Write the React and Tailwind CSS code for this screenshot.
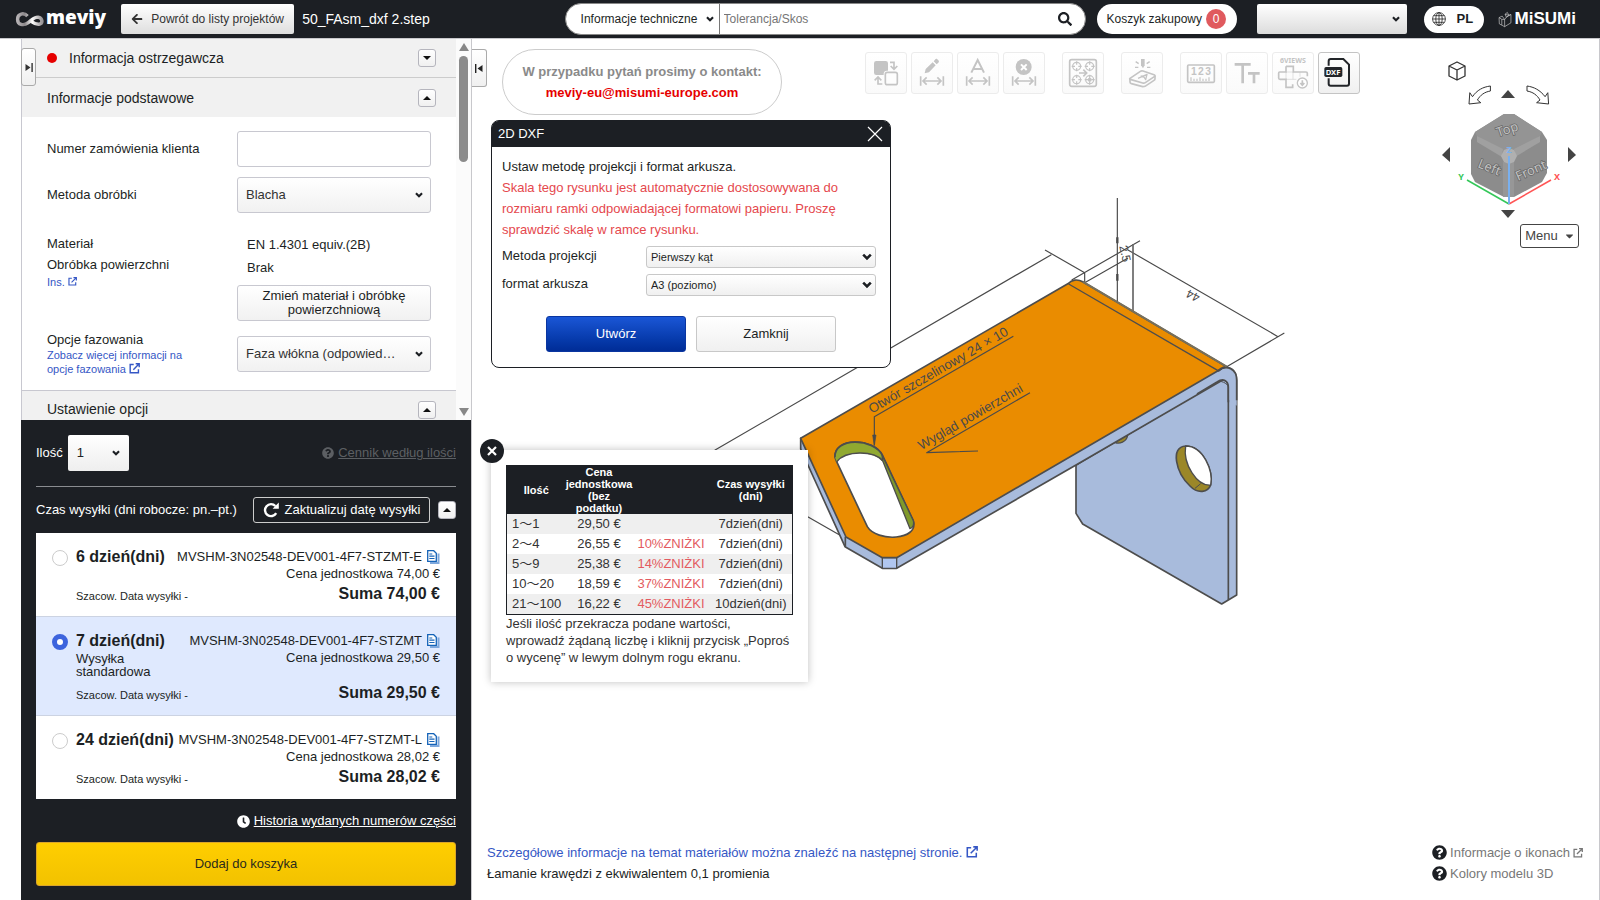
/* src/App.jsx */
import React, { useState } from 'react';
import { FaSearch, FaQuestionCircle, FaClock, FaArrowLeft, FaCaretDown } from 'react-icons/fa';

const OFFERS = [
  { id: 'e', days: '6 dzień(dni)', code: 'MVSHM-3N02548-DEV001-4F7-STZMT-E', unit: '74,00 €', sum: '74,00 €' },
  { id: 's', days: '7 dzień(dni)', note: 'Wysyłka standardowa', code: 'MVSHM-3N02548-DEV001-4F7-STZMT', unit: '29,50 €', sum: '29,50 €' },
  { id: 'l', days: '24 dzień(dni)', code: 'MVSHM-3N02548-DEV001-4F7-STZMT-L', unit: '28,02 €', sum: '28,02 €' },
];

const PRICES = [
  { qty: '1～1', price: '29,50 €', discount: '', time: '7dzień(dni)' },
  { qty: '2～4', price: '26,55 €', discount: '10%ZNIŻKI', time: '7dzień(dni)' },
  { qty: '5～9', price: '25,38 €', discount: '14%ZNIŻKI', time: '7dzień(dni)' },
  { qty: '10～20', price: '18,59 €', discount: '37%ZNIŻKI', time: '7dzień(dni)' },
  { qty: '21～100', price: '16,22 €', discount: '45%ZNIŻKI', time: '10dzień(dni)' },
];

const Chevron = ({ className }) => (
  <svg viewBox="0 0 10 7" className={`pointer-events-none absolute top-1/2 -translate-y-1/2 ${className}`}>
    <path d="M1.2 1.2 5 5l3.8-3.8" fill="none" stroke="#1c1f23" strokeWidth="2.6" />
  </svg>
);

const ExternalIcon = ({ className }) => (
  <svg viewBox="0 0 14 14" className={`inline-block ${className}`} fill="none" stroke="currentColor" strokeWidth="1.8">
    <path d="M6 2H1.5v10.5H12V8" />
    <path d="M8.5 1H13v4.5M12.6 1.4 5.5 8.5" />
  </svg>
);

const CopyIcon = () => (
  <svg viewBox="0 0 13 14" className="h-[14px] w-[13px] shrink-0" fill="none">
    <path d="M11.5 3.5v9.5H3" stroke="#7ea8dc" strokeWidth="2" />
    <path d="M.7.7h6l2.6 2.6v8H.7z" stroke="#1463b8" strokeWidth="1.3" fill="#fff" />
    <path d="M2.3 4h3M2.3 6.2h5.2M2.3 8.5h5.2" stroke="#1463b8" strokeWidth="1.2" />
  </svg>
);

const ToggleButton = ({ up, label }) => (
  <button type="button" aria-label={label}
    className="flex h-[18px] w-[18px] shrink-0 items-center justify-center rounded-[3px] border border-[#b5b5bd] bg-gradient-to-b from-white to-[#f0f0f0]">
    <svg viewBox="0 0 8 4" className="h-1 w-2" fill="#111"><path d={up ? 'M0 4 4 0l4 4z' : 'M0 0h8L4 4z'} /></svg>
  </button>
);

const Dimension = () => (
  <path d="M28 72v28M96 72v28M36 86h52M46 75 35 86l11 11M78 75l11 11-11 11" fill="none" stroke="#c4c4c4" strokeWidth="5" />
);

const Target = ({ x, y }) => (
  <g fill="none" stroke="#c4c4c4" strokeWidth="3.5">
    <circle cx={x} cy={y} r="12" />
    <path d={`M${x - 15} ${y}h10m10 0h10M${x} ${y - 15}v10m0 10v10`} />
  </g>
);

const TOOLS = [
  [
    {
      label: 'Zamień',
      icon: (
        <>
          <rect x="26" y="26" width="42" height="42" rx="7" fill="#c4c4c4" />
          <rect x="55" y="55" width="46" height="46" rx="10" fill="#fdfdfd" />
          <rect x="60" y="60" width="36" height="37" rx="6" fill="none" stroke="#c4c4c4" strokeWidth="5" />
          <path d="M74 30h12v20M76 41l10 10 10-10M51 95H38V75M28 84l10-10 10 10" fill="none" stroke="#c4c4c4" strokeWidth="5" />
        </>
      ),
    },
    {
      label: 'Edytuj wymiar',
      icon: (
        <>
          <path d="m43 50-3 13 13-3 20-21-9-9zM67 27l9 9 5-5c3-3 2-5 0-7l-3-3c-2-2-5-2-7 1z" fill="#c4c4c4" />
          <Dimension />
        </>
      ),
    },
    {
      label: 'Tekst wymiaru',
      icon: (
        <>
          <path d="M42 61 61 23l19 38M49 50h25" fill="none" stroke="#c4c4c4" strokeWidth="6" />
          <Dimension />
        </>
      ),
    },
    {
      label: 'Usuń wymiar',
      icon: (
        <>
          <circle cx="61" cy="44" r="24" fill="#c4c4c4" />
          <path d="m53 36 17 17m0-17L53 53" stroke="#fff" strokeWidth="6" />
          <Dimension />
        </>
      ),
    },
  ],
  [
    {
      label: 'Otwory',
      icon: (
        <>
          <rect x="22" y="22" width="80" height="80" rx="6" fill="none" stroke="#c4c4c4" strokeWidth="5" />
          <Target x={43} y={42} />
          <Target x={82} y={42} />
          <Target x={43} y={82} />
          <Target x={82} y={82} />
          <circle cx="82" cy="82" r="6" fill="#c4c4c4" />
          <path d="M50 62h22M63 52l10 10-10 10" fill="none" stroke="#c4c4c4" strokeWidth="5" />
        </>
      ),
    },
  ],
  [
    {
      label: 'Powierzchnia',
      icon: (
        <g fill="none" stroke="#c4c4c4" strokeWidth="5" strokeLinejoin="round">
          <path d="m26 78 31-21c3-2 5-2 8-1l33 11c4 2 4 4 1 6L72 91c-3 2-5 2-8 1L29 82c-4-1-5-2-3-4z" />
          <path d="M26 80v9c0 3 1 4 4 5l34 9c3 0 5 0 7-1l27-18c2-1 3-3 3-5v-9" />
          <path d="m50 78 27-12-4 16-5-8-10-3" strokeWidth="4" />
          <path d="M43 28l9 6M41 45h10M85 28l-9 6M87 45H77" strokeWidth="4" />
          <path d="M59 20h11v19l-5 9-6-9z" fill="#c4c4c4" stroke="none" />
        </g>
      ),
    },
  ],
  [
    {
      label: 'Skala',
      icon: (
        <>
          <rect x="22" y="38" width="80" height="52" rx="3" fill="none" stroke="#c4c4c4" strokeWidth="5" />
          <g fontSize="31" fontWeight="700" fill="#c4c4c4" className="font-['Liberation_Sans',sans-serif]">
            <text x="32" y="69">1</text>
            <text x="53" y="69">2</text>
            <text x="75" y="69">3</text>
          </g>
          <path d="M32 86V75m9 11v-7m9 7v-7m9 7V75m9 11v-7m9 7v-7m9 7V75" stroke="#c4c4c4" strokeWidth="3.5" />
        </>
      ),
    },
    {
      label: 'Rozmiar tekstu',
      icon: <path d="M25 36h48M49 36v57M65 63h35M83 63v30" stroke="#c4c4c4" strokeWidth="8" />,
    },
    {
      label: 'Sześć widoków',
      icon: (
        <>
          <text x="23" y="32" fontSize="21" fontWeight="700" fill="#c4c4c4" className="font-['Noto_Sans',sans-serif]">6VIEWS</text>
          <path d="M41 42h22v17h38c4 0 4 2 4 4v9M41 42v17H22c-3 0-3 2-3 4v14c0 3 1 4 4 4h18v24h20v-9" fill="none" stroke="#c4c4c4" strokeWidth="5" />
          <path d="M41 59h22M41 81h31M41 59v22M62 59v22M83 59v14" stroke="#c4c4c4" strokeWidth="1.5" />
          <circle cx="90" cy="92" r="15" fill="#fff" stroke="#c4c4c4" strokeWidth="4" />
          <path d="M90 84v14m-6-6 6 7 6-7" fill="none" stroke="#c4c4c4" strokeWidth="5" />
        </>
      ),
    },
    {
      label: 'DXF',
      active: true,
      icon: (
        <>
          <path d="M31 40V27c0-4 2-7 6-7h38l17 17v57c0 4-2 6-6 6H37c-4 0-6-2-6-6V78" fill="none" stroke="#222529" strokeWidth="6" />
          <rect x="18" y="44" width="54" height="30" rx="5" fill="#222529" />
          <text x="22" y="67" fontSize="23" fontWeight="700" fill="#fff" className="font-['Noto_Sans',sans-serif]">DXF</text>
        </>
      ),
    },
  ],
];

const Header = () => (
  <header className="flex h-[38px] items-center bg-[#1c1f24] pl-[15px] pr-6 text-xs">
    <a href="#home" className="flex items-center gap-[2px] text-white" aria-label="meviy">
      <svg viewBox="0 0 84 44" className="h-[15px] w-[29px]">
        <defs>
          <linearGradient id="loop" x1="0" x2="1">
            <stop offset="0" stopColor="#b5b1b4" />
            <stop offset=".3" stopColor="#8b878a" />
            <stop offset=".6" stopColor="#fff" />
            <stop offset="1" stopColor="#9a9699" />
          </linearGradient>
        </defs>
        <path d="M36 12C26 1 7 4 7 21c0 17 18 20 30 11 11-8 18-17 30-17 13 2 16 18 3 21-9 1-15-3-22-8" fill="none" stroke="url(#loop)" strokeWidth="10" />
      </svg>
      <span className="-mt-1 font-['Open_Sans',sans-serif] text-[19px] font-extrabold leading-7">meviy</span>
    </a>
    <button type="button" className="ml-[15px] flex h-[30px] w-[173px] items-center justify-center gap-2 whitespace-nowrap rounded-[2px] bg-gradient-to-b from-white to-[#dedede] text-[#333]">
      <FaArrowLeft className="h-3 w-3" />
      Powrót do listy projektów
    </button>
    <h1 className="ml-2 whitespace-nowrap text-sm text-white">50_FAsm_dxf 2.step</h1>

    <form className="ml-auto flex h-8 w-[521px] items-center rounded-full border border-[#888] bg-white" onSubmit={(e) => e.preventDefault()}>
      <div className="relative h-full w-[154px] shrink-0 border-r border-[#777]">
        <select aria-label="Kategoria" className="h-full w-full appearance-none bg-transparent pl-[15px] outline-none">
          <option>Informacje techniczne</option>
        </select>
        <Chevron className="right-[5px] h-[6px] w-2" />
      </div>
      <input aria-label="Szukaj" placeholder="Tolerancja/Skos" className="h-full min-w-0 flex-1 bg-transparent pl-1 outline-none placeholder:text-[#757575]" />
      <button type="submit" aria-label="Szukaj" className="mr-[13px]"><FaSearch className="h-[14px] w-[14px] text-[#1c1f24]" /></button>
    </form>
    <button type="button" className="ml-[11px] flex h-[30px] w-[140px] items-center gap-1 whitespace-nowrap rounded-full bg-white pl-[10px]">
      Koszyk zakupowy
      <span className="flex h-5 w-5 items-center justify-center rounded-full bg-[#e05a5e] text-white">0</span>
    </button>
    <div className="relative ml-5 h-[30px] w-[150px]">
      <select aria-label="Konto" className="h-full w-full appearance-none rounded-[2px] bg-gradient-to-b from-white to-[#dcdcdc]"><option></option></select>
      <Chevron className="right-[7px] h-[6px] w-2" />
    </div>
    <button type="button" className="ml-[17px] flex h-[27px] w-[60px] items-center gap-[11px] rounded-full bg-white pl-2 text-[13px] font-bold">
      <svg viewBox="0 0 14 14" className="h-[14px] w-[14px]" fill="none" stroke="#222" strokeWidth=".8">
        <circle cx="7" cy="7" r="6.4" />
        <ellipse cx="7" cy="7" rx="3.2" ry="6.4" />
        <path d="M7 .6v12.8M.6 7h12.8M1.6 3.7h10.8M1.6 10.3h10.8" />
      </svg>
      PL
    </button>
    <a href="#misumi" className="ml-[14px] flex items-center gap-[3px] text-white" aria-label="MiSUMi">
      <svg viewBox="0 0 14 18" className="h-[17px] w-[14px]" fill="none" stroke="#ccc" strokeWidth=".7" strokeLinejoin="round">
        <path d="M.7 7 4 5.400 6.600 9 6.600 16.600 1 13.600zM.7 7 3.600 8.800 6.600 9M3.600 8.800v6M6.600 9 8.500 6.500 7 3.500 9.500 1.500 11 4.500l2.300-.8v8.800l-6.700 4.100M7 3.500l4 1-2.500 2M8.500 6.500l4.800-2.800" />
      </svg>
      <span className="text-[17px] font-bold leading-5">MiSUMi</span>
    </a>
  </header>
);

const SectionTitle = ({ title, up, warning, className = '' }) => (
  <div className={`flex justify-between bg-[#f1f1f1] pl-[25px] pr-5 text-sm ${className}`}>
    <h2 className="flex items-center gap-3">
      {warning && <span className="h-[10px] w-[10px] rounded-full bg-[#e60000]" />}
      {title}
    </h2>
    <ToggleButton up={up} label={title} />
  </div>
);

const Basics = () => (
  <div className="flex border-l border-[#c8c8d0] bg-white">
    <div className="min-w-0 flex-1">
      <SectionTitle title="Informacja ostrzegawcza" warning className="h-[39px] items-center border-b border-[#ccc]" />
      <SectionTitle title="Informacje podstawowe" up className="h-[39px] items-center" />
      <div className="flex flex-col border-b border-[#c8c8d0] px-[25px] pb-[14px] pt-[14px] leading-4">
        <div className="flex items-center justify-between">
          <label htmlFor="order">Numer zamówienia klienta</label>
          <input id="order" className="h-9 w-[194px] rounded-[3px] border border-[#c8c8d0] px-2" />
        </div>
        <div className="mt-[10px] flex items-center justify-between">
          <label htmlFor="method">Metoda obróbki</label>
          <div className="relative w-[194px]">
            <select id="method" className="h-9 w-full appearance-none rounded-[3px] border border-[#c8c8d0] bg-gradient-to-b from-white to-[#f1f1f1] pl-2 text-[#333]">
              <option>Blacha</option>
            </select>
            <Chevron className="right-2 h-[6px] w-2" />
          </div>
        </div>
        <div className="mt-4 flex justify-between">
          <div>
            <p className="mt-1 leading-[21px]">Materiał<br />Obróbka powierzchni</p>
            <a href="#ins" className="block text-[11px] leading-[14px] text-[#3557c5]">Ins. <ExternalIcon className="-mt-[3px] h-[9px] w-[9px]" /></a>
          </div>
          <div className="w-[194px]">
            <p className="mt-1 pl-[10px] leading-[23px]">EN 1.4301 equiv.(2B)<br />Brak</p>
            <button type="button" className="mt-[6px] h-9 w-full rounded-[3px] border border-[#c8c8d0] bg-gradient-to-b from-white to-[#f1f1f1] px-5 leading-[14px]">
              Zmień materiał i obróbkę powierzchniową
            </button>
          </div>
        </div>
        <div className="mt-[11px] flex justify-between">
          <div>
            <label htmlFor="bevel">Opcje fazowania</label>
            <a href="#bevel-info" className="block w-[150px] text-[11px] leading-[14px] text-[#3557c5]">
              Zobacz więcej informacji na opcje fazowania <ExternalIcon className="-mt-1 h-[11px] w-[11px]" />
            </a>
          </div>
          <div className="relative mt-1 h-9 w-[194px]">
            <select id="bevel" className="h-9 w-full appearance-none rounded-[3px] border border-[#c8c8d0] bg-gradient-to-b from-white to-[#f1f1f1] pl-2 text-[#333]">
              <option>Faza włókna (odpowied…</option>
            </select>
            <Chevron className="right-2 h-[6px] w-2" />
          </div>
        </div>
      </div>
      <SectionTitle title="Ustawienie opcji" up className="h-[29px] items-end pb-px" />
    </div>
    <div className="flex w-[15px] flex-col items-center bg-[#fbfbfb] pb-1 pt-1">
      <svg viewBox="0 0 10 8" className="h-2 w-[10px]" fill="#888"><path d="M0 8 5 0l5 8z" /></svg>
      <div className="mt-[5px] h-[106px] w-[9px] rounded-full bg-[#8b8b8b]" />
      <svg viewBox="0 0 10 8" className="mt-auto h-2 w-[10px]" fill="#888"><path d="M0 0h10L5 8z" /></svg>
    </div>
  </div>
);

const Offer = ({ offer, checked, onSelect }) => (
  <label className={`flex border-b border-[#ccd3e2] px-4 pb-3 pt-[15px] last:border-b-0 ${checked ? 'bg-[#dfe9fe]' : 'bg-white'}`}>
    <input type="radio" name="offer" checked={checked} onChange={() => onSelect(offer.id)}
      className="mt-[2px] h-4 w-4 shrink-0 appearance-none rounded-full border border-[#ccc] bg-white checked:border-[5px] checked:border-[#3d64dd]" />
    <span className="ml-2 flex min-w-0 flex-1 justify-between">
      <span className="flex w-[100px] shrink-0 flex-col justify-between">
        <span>
          <span className="block whitespace-nowrap text-base font-bold leading-[18px]">{offer.days}</span>
          {offer.note && <span className="block w-20 pt-[2px] leading-[13px]">{offer.note}</span>}
        </span>
        <span className="whitespace-nowrap pb-[2px] text-[11px] leading-3">Szacow. Data wysyłki -</span>
      </span>
      <span className="flex flex-col items-end whitespace-nowrap">
        <span className="flex items-center gap-[5px] leading-[17px]">{offer.code}<CopyIcon /></span>
        <span className="leading-[17px]">Cena jednostkowa {offer.unit}</span>
        <span className={`text-base font-bold leading-5 ${offer.note ? 'mt-[17px]' : 'mt-[2px]'}`}>Suma {offer.sum}</span>
      </span>
    </span>
  </label>
);

const OrderPanel = () => {
  const [selected, setSelected] = useState('s');

  return (
    <div className="flex-1 bg-[#1c1f24] px-[15px] pb-[15px] pt-[15px] text-white">
      <div className="flex items-center">
        <label htmlFor="qty" className="mr-[5px]">Ilość</label>
        <div className="relative h-9 w-[61px]">
          <select id="qty" className="h-full w-full appearance-none rounded-[2px] bg-gradient-to-b from-white to-[#eee] pl-[9px] text-[#222]">
            <option>1</option>
          </select>
          <Chevron className="right-[9px] h-[6px] w-2" />
        </div>
        <a href="#prices" className="ml-auto flex items-center gap-1 text-[#5c5f63]">
          <FaQuestionCircle className="h-3 w-3" /><span className="underline">Cennik według ilości</span>
        </a>
      </div>
      <hr className="mt-[15px] border-[#8a8c90]" />
      <div className="mt-[10px] flex items-center">
        <span className="whitespace-nowrap">Czas wysyłki (dni robocze: pn.–pt.)</span>
        <button type="button" className="ml-auto flex h-[26px] w-[177px] items-center justify-center gap-[6px] whitespace-nowrap rounded-[3px] border border-[#ccc]">
          <svg viewBox="0 0 16 16" className="h-4 w-4" fill="none" stroke="#fff">
            <path d="M13.2 11.2A6 6 0 1 1 12.4 4" strokeWidth="2.4" />
            <path d="M15.8.6v6.2H9.6z" fill="#fff" stroke="none" />
          </svg>
          Zaktualizuj datę wysyłki
        </button>
        <span className="ml-2 text-black"><ToggleButton up label="Zwiń terminy" /></span>
      </div>
      <div className="mt-[10px] text-[#1c1f24]">
        {OFFERS.map((o) => (
          <Offer key={o.id} offer={o} checked={selected === o.id} onSelect={setSelected} />
        ))}
      </div>
      <a href="#history" className="mt-[14px] flex items-center justify-end gap-1 leading-4">
        <FaClock className="h-[13px] w-[13px]" /><span className="underline">Historia wydanych numerów części</span>
      </a>
      <button type="button" className="mt-[13px] h-11 w-full rounded-[3px] border border-[#dba52a] bg-gradient-to-b from-[#ffce00] to-[#f2c200] text-[#2b2b1c]">
        Dodaj do koszyka
      </button>
    </div>
  );
};

const DxfDialog = () => (
  <section role="dialog" aria-label="2D DXF" className="absolute left-[19px] top-[81px] w-[400px] rounded-lg border border-[#1c1f24] bg-white">
    <div className="flex h-[26px] items-center justify-between rounded-t-[6px] bg-[#1c1f24] pl-[6px] pr-[7px] text-white">
      <h2>2D DXF</h2>
      <button type="button" aria-label="Zamknij okno">
        <svg viewBox="0 0 16 16" className="h-4 w-4" stroke="#fff" strokeWidth="1.2"><path d="m1 1 14 14M15 1 1 15" /></svg>
      </button>
    </div>
    <div className="px-[10px] pb-[15px] pt-[9px]">
      <p className="leading-[21px]">Ustaw metodę projekcji i format arkusza.</p>
      <p className="leading-[21px] text-[#e5484d]">Skala tego rysunku jest automatycznie dostosowywana do rozmiaru ramki odpowiadającej formatowi papieru. Proszę sprawdzić skalę w ramce rysunku.</p>
      {[
        { id: 'projection', label: 'Metoda projekcji', value: 'Pierwszy kąt' },
        { id: 'sheet', label: 'format arkusza', value: 'A3 (poziomo)' },
      ].map((f) => (
        <div key={f.id} className="mt-[6px] flex items-start justify-between pr-1">
          <label htmlFor={f.id} className="leading-5">{f.label}</label>
          <div className="relative w-[230px]">
            <select id={f.id} className="block h-[22px] w-full appearance-none rounded-[3px] border border-[#c8c8c8] bg-gradient-to-b from-white to-[#f0f0f0] pl-1 text-[11px]">
              <option>{f.value}</option>
            </select>
            <Chevron className="right-1 h-[7px] w-[10px]" />
          </div>
        </div>
      ))}
      <div className="mt-5 flex justify-center gap-[10px]">
        <button type="button" className="h-9 w-[140px] rounded-[3px] border border-[#0a35a0] bg-gradient-to-b from-[#1a56d6] to-[#002c96] text-white">Utwórz</button>
        <button type="button" className="h-9 w-[140px] rounded-[3px] border border-[#c8c8c8] bg-gradient-to-b from-white to-[#f0f0f0]">Zamknij</button>
      </div>
    </div>
  </section>
);

const PricePopup = () => (
  <section className="absolute left-[19px] top-[411px] w-[317px] bg-white px-[15px] pb-4 pt-[15px] shadow-[0_0_8px_rgba(0,0,0,0.25)]">
    <button type="button" aria-label="Zamknij cennik" className="absolute -left-[11px] -top-[11px] flex h-6 w-6 items-center justify-center rounded-full bg-[#1c1f24]">
      <svg viewBox="0 0 10 10" className="h-[10px] w-[10px]" stroke="#fff" strokeWidth="2.2"><path d="m1 1 8 8M9 1 1 9" /></svg>
    </button>
    <table className="w-full table-fixed border border-[#1c1f24] text-center text-[#333]">
      <colgroup>
        <col className="w-[59px]" /><col className="w-[67px]" /><col className="w-[77px]" /><col />
      </colgroup>
      <thead className="bg-[#1c1f24] text-[11px] leading-3 text-white">
        <tr className="h-12">
          <th>Ilość</th>
          <th>Cena jednostkowa (bez podatku)</th>
          <th></th>
          <th className="px-1">Czas wysyłki (dni)</th>
        </tr>
      </thead>
      <tbody>
        {PRICES.map((p) => (
          <tr key={p.qty} className="h-5 leading-5 odd:bg-[#efefef]">
            <td className="pl-[5px] text-left"><span className="block h-5 overflow-visible whitespace-nowrap">{p.qty}</span></td>
            <td>{p.price}</td>
            <td className="text-[#e35b60]">{p.discount}</td>
            <td className="whitespace-nowrap">{p.time}</td>
          </tr>
        ))}
      </tbody>
    </table>
    <p className="pr-[3px] leading-[17px] text-[#333]">Jeśli ilość przekracza podane wartości, wprowadź żądaną liczbę i kliknij przycisk „Poproś o wycenę” w lewym dolnym rogu ekranu.</p>
  </section>
);

// Bracket with its dimension lines
const Model = () => (
  <svg viewBox="-300 0 1860 1290" className="absolute left-[208px] top-[150px] h-[430px] w-[620px] font-['Liberation_Sans',sans-serif]" stroke="#4a4a4a" strokeWidth="3.5" fill="none" strokeLinejoin="round">
    <path d="M814 197-196 784M795 183l119 68v38M875 273l205-118M914 281l130-74M1012 27v325M1044 183l450 260M1340 533l173-101M-10 930l206 118" />
    <path d="M1059 165v210" stroke="#666" strokeWidth="5" />
    <path d="M1012 145v18M1012 255v20" strokeWidth="7" />
    <g stroke="#4d4d4d" strokeWidth="5">
      <path d="M888 828v145l20 32 417 240 45-27V573c0-22-14-40-34-38L1120 665z" fill="#a8bbdc" />
      <path d="M1345 1232V595c0-22-16-28-34-16L888 828" />
      <path d="M1316 577c12 0 20 4 27 12" strokeWidth="3" />
      <path d="M1005 760c12 6 35 0 38-22z" fill="#9b8728" strokeWidth="4" />
      <path d="M1217 771c53 0 83 75 75 117-8 22-38 28-62 3-43-40-60-118-13-120z" fill="#9b8728" />
      <path d="M1217 771c53 0 83 75 75 117-40 4-84-62-75-117z" fill="#fff" strokeWidth="4" />
      <path d="m1245 898 17-14" strokeWidth="3" />
      <path d="M62 748v32l133 293 112 65h43l538-310 440-255-8-30z" fill="#a8bbdc" />
      <path d="M307 1106h43v32h-43z" fill="#b0c6ef" strokeWidth="4" />
      <path d="M196 1043v30" />
      <path d="M1300 560l28-20c24-12 42 6 42 30v80l-25-20v-35c0-22-16-28-34-16z" fill="#a8bbdc" stroke="none" />
      <path d="M62 748 866 283c8-10 26-14 42-5l432 255c-10 0-18 6-26 12L350 1106h-43l-109-62z" fill="#ea8c00" />
      <path d="M1316 544c24-16 54-6 54 30v60M1345 640v-45c0-22-16-28-34-16l-60 36" />
      <path d="m866 285 452 262" strokeWidth="4" />
      <path d="M908 278l432 255" stroke="#77705c" strokeWidth="6" />
      <path d="M165 805c-4-60 115-60 143-5l92 195c18 60-110 65-138 18l-92-195z" fill="#fff" />
      <path d="M165 805c-4-60 115-60 143-5v18c-28-34-110-34-138 0z" fill="#90a930" stroke="none" />
      <path d="m306 798 94 197c3 12-2 22-10 24L308 815z" fill="#809a2b" strokeWidth="4" />
      <path d="M165 805c-4-60 115-60 143-5M170 818c28-34 110-34 138-3" />
    </g>
    <path d="M700 442 283 683v85M750 611 440 791l154-5M540 788h5" />
    <path d="M278 738h10l-5 32z" fill="#4a4a4a" strokeWidth="2" />
    <g fill="#4a4a4a" stroke="none">
      <text transform="translate(275 674) rotate(-30)" fontSize="40">Otwór szczelinowy 24 × 10</text>
      <text transform="translate(424 784) rotate(-30)" fontSize="40">Wygląd powierzchni</text>
      <text transform="translate(1262 318) rotate(206)" fontSize="36">44</text>
      <text transform="translate(1018 172) rotate(78)" fontSize="36">2.5</text>
    </g>
  </svg>
);

const ViewCube = () => (
  <div className="absolute right-3 top-5 w-[160px]">
    <svg viewBox="7 0 160 163" className="h-[163px] w-[160px] font-['Noto_Sans',sans-serif]">
      <path d="m29 7 8-4 8 4v10l-8 4-8-4zM29 7l8 4 8-4M37 11v10" fill="none" stroke="#333" strokeWidth="1.3" strokeLinejoin="round" />
      <path d="M70.400 27v5c-6 1-10 4-13 9l3.400 2.700L49 45l.8-11.300 2.700 4C57 31 63 28 70.400 27z" fill="#fff" stroke="#333" strokeLinejoin="round" />
      <path d="M107 27v5c6 1 10 4 13 9l-3.400 2.700 12 1.300-.8-11.300-2.700 4C120 31 114 28 107 27z" fill="#fff" stroke="#333" strokeLinejoin="round" />
      <path d="M81 39h14l-7-8zM81 151h14l-7 8zM30 88v15l-8-7zM148 88v15l8-7z" fill="#444" />
      <path d="M84 55h10l28 18 5 8v33l-5 9-28 15H84l-29-15-4-8V81l4-8z" fill="#8c8c8c" />
      <path d="M84 55h10l28 18-2 4-25 15H82L57 77l-2-4z" fill="#949494" />
      <path d="m57 77 26 13-1 8-25-15zM120 77 94 90l1 8 25-15z" fill="#a0a0a0" />
      <path d="M83 103v35h11v-35z" fill="#979797" />
      <path d="m84 91 5-2 5 2 3 6-3 6-5 2-5-2-3-6z" fill="#b0b0b0" />
      <g fontSize="13" fill="#c2c2c2" stroke="#666" strokeWidth="1.4" paintOrder="stroke">
        <text transform="translate(78 78) rotate(-18)">Top</text>
        <text transform="translate(57 108) rotate(22)">Left</text>
        <text transform="translate(98 122) rotate(-24)">Front</text>
      </g>
      <path d="M89 145 47 121" stroke="#34c759" strokeWidth="1.5" />
      <path d="m89 145 42-24" stroke="#f55" strokeWidth="1.5" />
      <path d="M89 145V97" stroke="#79b0ef" strokeWidth="2" />
      <g fontSize="9" fontWeight="700" textAnchor="middle">
        <text x="41" y="121" fill="#34c759">Y</text>
        <text x="137" y="121" fill="#f55">X</text>
        <text x="89" y="94" fill="#79b0ef">Z</text>
      </g>
    </svg>
    <button type="button" className="ml-auto mr-2 mt-[2px] flex h-6 w-[59px] items-center justify-center gap-[7px] rounded-[3px] border border-[#444] bg-white text-[#444]">
      Menu <FaCaretDown className="h-3 w-[9px]" />
    </button>
  </div>
);

const Viewer = () => (
  <main className="relative flex min-w-0 flex-1 flex-col overflow-hidden border-x border-b border-[#c8c8cc] bg-white">
    <Model />
    <button type="button" aria-label="Zwiń panel" className="absolute left-0 top-[10px] flex h-[38px] w-[15px] items-center justify-center rounded-r-[3px] border border-l-0 border-[#aaa] bg-gradient-to-b from-white to-[#f0f0f0]">
      <svg viewBox="0 0 8 9" className="h-[9px] w-2" fill="#222"><path d="M0 0h1.400v9H0zM7.500 1v7l-5-3.500z" /></svg>
    </button>
    <div className="flex items-start pl-[30px] pt-[10px]">
      <p className="flex h-[66px] w-[280px] flex-col items-center justify-center whitespace-nowrap rounded-full border border-[#ccc] bg-white font-bold leading-[21px] text-[#8a8a8a]">
        W przypadku pytań prosimy o kontakt:
        <a href="mailto:meviy-eu@misumi-europe.com" className="text-[#e60000]">meviy-eu@misumi-europe.com</a>
      </p>
      <div className="ml-[83px] mt-[3px] flex gap-[17px]">
        {TOOLS.map((group) => (
          <div key={group[0].label} className="flex gap-1">
            {group.map((tool) => (
              <button key={tool.label} type="button" aria-label={tool.label}
                className={`h-[42px] w-[42px] rounded-[3px] border bg-gradient-to-b from-white ${tool.active ? 'border-[#c4c4c4] to-[#f0f0f0]' : 'border-[#ececec] to-[#fafafa]'}`}>
                <svg viewBox="2 2 120 120" className="h-10 w-10">{tool.icon}</svg>
              </button>
            ))}
          </div>
        ))}
      </div>
    </div>
    <ViewCube />
    <DxfDialog />
    <PricePopup />
    <footer className="mt-auto flex justify-between pb-4 pl-[15px] pr-4 leading-[21px]">
      <div>
        <a href="#materials" className="block text-[#3557c5]">
          Szczegółowe informacje na temat materiałów można znaleźć na następnej stronie. <ExternalIcon className="-mt-1 h-3 w-3" />
        </a>
        <p>Łamanie krawędzi z ekwiwalentem 0,1 promienia</p>
      </div>
      <div className="text-[#777]">
        <a href="#icons" className="flex items-center gap-[3px]">
          <FaQuestionCircle className="h-[15px] w-[15px] text-[#1c1f24]" />Informacje o ikonach <ExternalIcon className="h-[10px] w-[10px]" />
        </a>
        <a href="#colors" className="flex items-center gap-[3px]">
          <FaQuestionCircle className="h-[15px] w-[15px] text-[#1c1f24]" />Kolory modelu 3D
        </a>
      </div>
    </footer>
  </main>
);

const App = () => (
  <div className="flex min-h-screen flex-col bg-white font-['Liberation_Sans','Noto_Sans_CJK_JP',sans-serif] text-[13px] text-[#1c1f24]">
    <Header />
    <div className="flex flex-1 border-t border-[#c8c8cc]">
      <aside className="relative ml-[21px] flex w-[450px] shrink-0 flex-col">
        <Basics />
        <OrderPanel />
        <button type="button" aria-label="Rozwiń panel" className="absolute left-0 top-[9px] flex h-[38px] w-[15px] items-center justify-center rounded-[3px] border border-[#aaa] bg-gradient-to-b from-white to-[#f0f0f0]">
          <svg viewBox="0 0 8 9" className="h-[9px] w-2" fill="#333"><path d="M.5 1v7l5-3.500zM6.400 0h1.400v9H6.400z" /></svg>
        </button>
      </aside>
      <Viewer />
    </div>
  </div>
);

export default App;
